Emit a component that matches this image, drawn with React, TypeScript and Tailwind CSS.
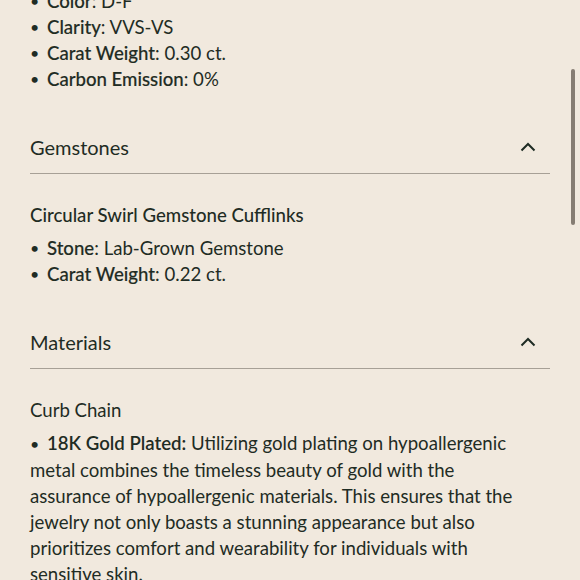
import React from 'react';

const Chevron = () => (
  <svg width="16" height="10" viewBox="0 0 16 10" fill="none" className="text-[#1f2c24]">
    <polyline points="1.5,8.5 8,2 14.5,8.5" stroke="currentColor" strokeWidth="2" />
  </svg>
);

const Item = ({ label, value }: { label: string; value: string }) => (
  <li className="flex h-[26px] items-center">
    <span className="w-[17px] text-[16px]">•</span>
    <span>
      <span className="font-medium [-webkit-text-stroke:0.15px_currentColor]">{label}</span>: {value}
    </span>
  </li>
);

const Section = ({
  title,
  children,
}: {
  title: string;
  children: React.ReactNode;
}) => (
  <div className="mt-[29px]">
    <div className="flex h-[53px] items-center justify-between border-b border-[#a7a096] pr-[14px]">
      <h2 className="text-[20px]">{title}</h2>
      <Chevron />
    </div>
    <div className="pt-[28px]">{children}</div>
  </div>
);

export default function App() {
  return (
    <div
      className="relative h-[580px] w-[580px] overflow-hidden bg-[#f1e9de] text-[#1f2c24]"
      style={{ fontFamily: 'Lato, "Open Sans", sans-serif' }}
    >
      <div className="-mt-[12px] px-[30px] text-[18.6px] leading-[26px]">
        <ul>
          <Item label="Color" value="D-F" />
          <Item label="Clarity" value="VVS-VS" />
          <Item label="Carat Weight" value="0.30 ct." />
          <Item label="Carbon Emission" value="0%" />
        </ul>

        <Section title="Gemstones">
          <p className="font-medium">Circular Swirl Gemstone Cufflinks</p>
          <ul className="mt-[7px]">
            <Item label="Stone" value="Lab-Grown Gemstone" />
            <Item label="Carat Weight" value="0.22 ct." />
          </ul>
        </Section>

        <Section title="Materials">
          <p>Curb Chain</p>
          <p className="mt-[7px] pr-[25px]">
            <span className="inline-block w-[17px] text-[16px]">•</span>
            <span className="font-semibold">18K Gold Plated:</span> Utilizing gold
            plating on hypoallergenic metal combines the timeless beauty of gold with the
            assurance of hypoallergenic materials. This ensures that the jewelry not only
            boasts a stunning appearance but also prioritizes comfort and wearability for
            individuals with sensitive skin.
          </p>
        </Section>
      </div>

      {/* scroll indicator */}
      <div className="absolute left-[571px] top-[69px] h-[156px] w-[4px] rounded-full bg-[#867d73]" />
    </div>
  );
}
